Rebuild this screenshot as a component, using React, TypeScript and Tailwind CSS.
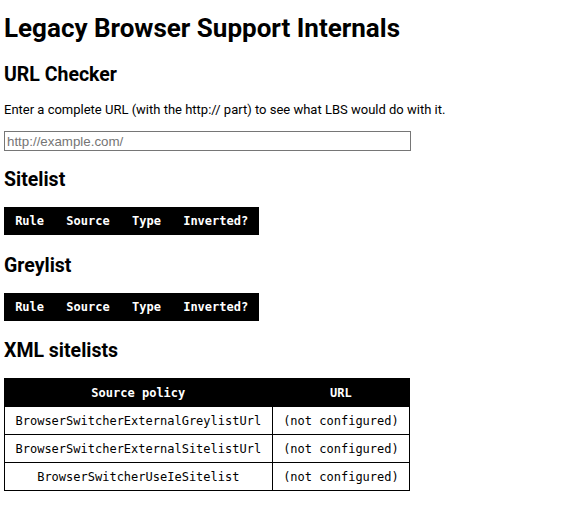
const mono = { fontFamily: '"DejaVu Sans Mono", monospace' };

const ruleColumns = ['Rule', 'Source', 'Type', 'Inverted?'];

const xmlSitelists = [
  { policy: 'BrowserSwitcherExternalGreylistUrl', url: '(not configured)' },
  { policy: 'BrowserSwitcherExternalSitelistUrl', url: '(not configured)' },
  { policy: 'BrowserSwitcherUseIeSitelist', url: '(not configured)' },
];

function RuleTable() {
  return (
    <table className="border-collapse font-['DejaVu_Sans_Mono',monospace] text-[12px]">
      <thead>
        <tr className="h-[28px] bg-black text-white">
          {ruleColumns.map((col) => (
            <th key={col} className="px-[11.15px] py-0 font-bold leading-[14px]">
              {col}
            </th>
          ))}
        </tr>
      </thead>
      <tbody></tbody>
    </table>
  );
}

export default function App() {
  return (
    <div className="min-h-[532px] bg-white px-[4px] pb-[20px] font-['Roboto',sans-serif] text-black">
      <h1 className="mt-[13px] text-[26px] font-bold leading-[30px]">
        Legacy Browser Support Internals
      </h1>

      <h2 className="mt-[20px] text-[19.5px] font-bold leading-[23px]">URL Checker</h2>
      <p className="mt-[16px] text-[13px] leading-[15px]">
        Enter a complete URL (with the http:// part) to see what LBS would do with it.
      </p>
      <input
        type="text"
        placeholder="http://example.com/"
        className="mt-[14px] block h-[20px] w-[407px] border border-[#767676] px-[2px] py-[1px] font-['Liberation_Sans',sans-serif] text-[13.33px] outline-none placeholder:text-[#757575]"
      />

      <h2 className="mt-[17px] text-[19.5px] font-bold leading-[23px]">Sitelist</h2>
      <div className="mt-[16px]">
        <RuleTable />
      </div>

      <h2 className="mt-[19px] text-[19.5px] font-bold leading-[23px]">Greylist</h2>
      <div className="mt-[16px]">
        <RuleTable />
      </div>

      <h2 className="mt-[18px] text-[19.5px] font-bold leading-[23px]">XML sitelists</h2>
      <table className="mt-[16px] border-collapse border border-black text-[12px]" style={mono}>
        <thead>
          <tr className="h-[28px] bg-black text-white">
            <th className="border border-black px-[10.5px] py-0 text-center font-bold leading-[14px]">
              Source policy
            </th>
            <th className="border border-black px-[10.5px] py-0 text-center font-bold leading-[14px]">
              URL
            </th>
          </tr>
        </thead>
        <tbody>
          {xmlSitelists.map((row) => (
            <tr key={row.policy} className="h-[28px]">
              <td className="border border-black px-[10.5px] py-0 text-center leading-[14px]">
                {row.policy}
              </td>
              <td className="border border-black px-[10.5px] py-0 text-center leading-[14px]">
                {row.url}
              </td>
            </tr>
          ))}
        </tbody>
      </table>
    </div>
  );
}
